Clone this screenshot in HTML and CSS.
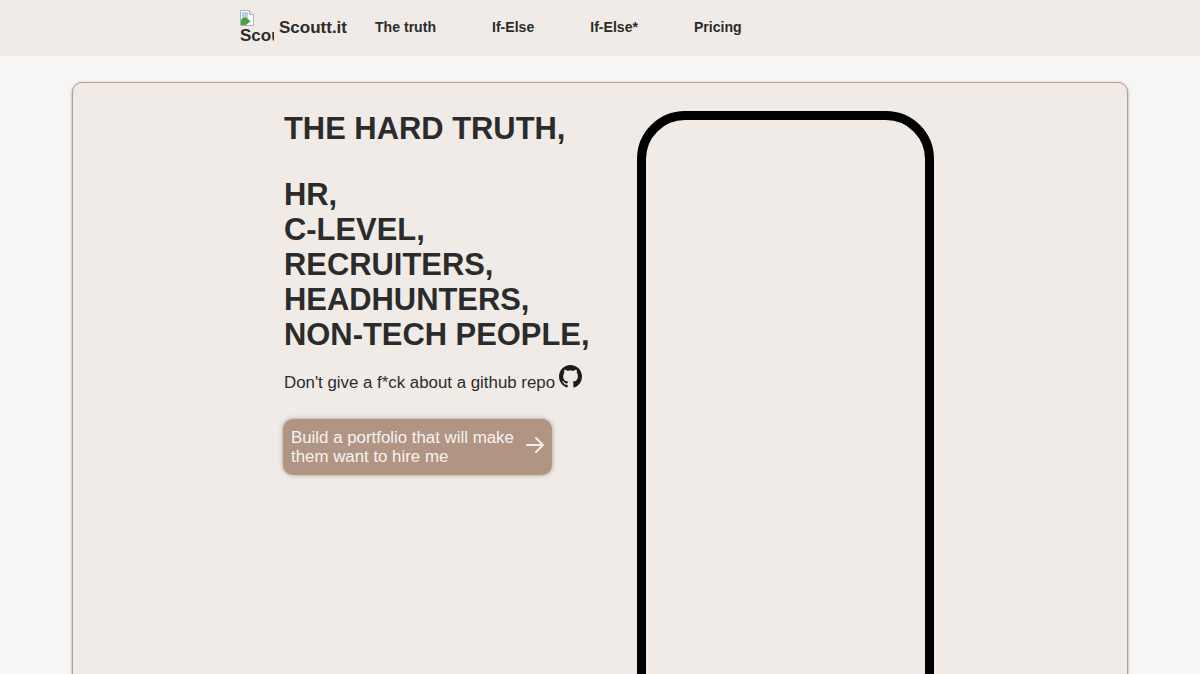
FILE: index.html
```html
<!DOCTYPE html>
<html lang="en">
<head>
	<meta charset="UTF-8">
	<title>Scoutt.it</title>
	<link rel="stylesheet" href="styles.css">
</head>
<body>
	<header class="topbar">
		<nav class="nav">
			<a class="brand" href="#">
				<span class="logo">
					<svg class="logo-broken" width="16" height="16" viewBox="0 0 16 16">
						<path d="M.5 .5h9l4 4v11H.5z" fill="#fff" stroke="#a9b4c2"/>
						<path d="M9.5 .5v4h4" fill="#e4e8ee" stroke="#a9b4c2"/>
						<path d="M2 2h6v6H2z" fill="#b9cff0"/>
						<path d="M1 15V10c2-3 5-3 7-1 1 1 2 2 3 2l-5 4z" fill="#4fa33a"/>
						<path d="M7 15l6-5v5z" fill="#fff"/>
					</svg>
					<span class="logo-alt">Scoutt.it</span>
				</span>
				<span class="brand-name">Scoutt.it</span>
			</a>
			<a class="nav-link" href="#">The truth</a>
			<a class="nav-link" href="#">If-Else</a>
			<a class="nav-link" href="#">If-Else*</a>
			<a class="nav-link" href="#">Pricing</a>
		</nav>
	</header>

	<main class="card">
		<section class="intro">
			<h1 class="title">
				<span class="title-lead">THE HARD TRUTH,</span>
				<span class="title-list">HR,<br>C-LEVEL,<br>RECRUITERS,<br>HEADHUNTERS,<br>NON-TECH PEOPLE,</span>
			</h1>
			<p class="sub">
				Don't give a f*ck about a github repo
				<svg class="gh" width="23" height="23" viewBox="0 0 16 16">
					<path fill="#1b1b1b" d="M8 0C3.58 0 0 3.58 0 8c0 3.54 2.29 6.53 5.47 7.59.4.07.55-.17.55-.38 0-.19-.01-.82-.01-1.49-2.01.37-2.53-.49-2.69-.94-.09-.23-.48-.94-.82-1.13-.28-.15-.68-.52-.01-.53.63-.01 1.08.58 1.23.82.72 1.21 1.87.87 2.33.66.07-.52.28-.87.51-1.07-1.78-.2-3.64-.89-3.64-3.95 0-.87.31-1.59.82-2.15-.08-.2-.36-1.02.08-2.12 0 0 .67-.21 2.2.82.64-.18 1.32-.27 2-.27s1.36.09 2 .27c1.53-1.04 2.2-.82 2.2-.82.44 1.1.16 1.92.08 2.12.51.56.82 1.27.82 2.15 0 3.07-1.87 3.75-3.65 3.95.29.25.54.73.54 1.48 0 1.07-.01 1.93-.01 2.2 0 .21.15.46.55.38A8.01 8.01 0 0 0 16 8c0-4.42-3.58-8-8-8z"/>
				</svg>
			</p>
			<a class="cta" href="#">
				<span>Build a portfolio that will make them want to hire me</span>
				<svg class="cta-arrow" width="20" height="20" viewBox="0 0 20 20" fill="none" stroke="#f5efea" stroke-width="2" stroke-linecap="round" stroke-linejoin="round">
					<path d="M2 10h16M11 3l7 7-7 7"/>
				</svg>
			</a>
		</section>
		<div class="phone"></div>
	</main>
</body>
</html>
```

FILE: styles.css
```css
/*css reset*/
html,body,h1,p{
	padding: 0;
	margin: 0;
}
html,body{
	height: 674px;
	overflow: hidden;
}
body{
	background: #f8f6f4;
	color: #2b2b2b;
	font-family: "Liberation Sans", Arial, sans-serif;
}
a{
	color: inherit;
	text-decoration: none;
}

/*top bar*/
.topbar{
	height: 56px;
	background: #f0ebe7;
	display: flex;
	align-items: center;
}
.nav{
	display: flex;
	align-items: center;
	padding-left: 240px;
}
.brand{
	display: flex;
	align-items: center;
}
.logo{
	display: block;
	width: 34px;
	height: 34px;
	overflow: hidden;
	white-space: nowrap;
	font-size: 17px;
	font-weight: bold;
	line-height: 19px;
	margin: 0 5px 2px 0;
}
.logo-broken{
	display: block;
}
.logo-alt{
	display: block;
}
.brand-name{
	font-size: 17px;
	font-weight: bold;
}
.nav-link{
	font-size: 14.08px;
	font-weight: bold;
	padding: 0 28px 2px;
}

/*card*/
.card{
	height: 800px;
	margin: 26px 72px 0;
	background: #f0ebe7;
	border: 1px solid #b89c8c;
	border-radius: 10px;
	box-shadow: 0 1px 3px rgba(100,75,60,.55);
	display: flex;
	justify-content: center;
	gap: 43px;
	padding: 28px 0 0 18px;
	box-sizing: border-box;
}
.intro{
	width: 310px;
}
.title{
	font-size: 30.9px;
	line-height: 35px;
	font-weight: bold;
}
.title-lead,
.title-list{
	display: block;
}
.title-lead{
	margin-bottom: 31px;
}
.sub{
	font-size: 16.85px;
	margin-top: 13px;
	white-space: nowrap;
}
.gh{
	vertical-align: 0;
	margin-left: -1px;
}
.cta{
	display: flex;
	align-items: center;
	width: 269px;
	height: 56px;
	box-sizing: border-box;
	margin: 26px 0 0 -1px;
	padding: 0 7px 0 8px;
	background: #b09484;
	color: #f8f3ef;
	border-radius: 10px;
	box-shadow: 0 0 4px rgba(120,90,75,.6);
	font-size: 16.85px;
	line-height: 19px;
	gap: 10px;
}
.cta-arrow{
	flex-shrink: 0;
	margin-bottom: 4px;
}
.phone{
	width: 297px;
	height: 640px;
	box-sizing: border-box;
	border: 9px solid #000;
	border-radius: 48px;
}
```
